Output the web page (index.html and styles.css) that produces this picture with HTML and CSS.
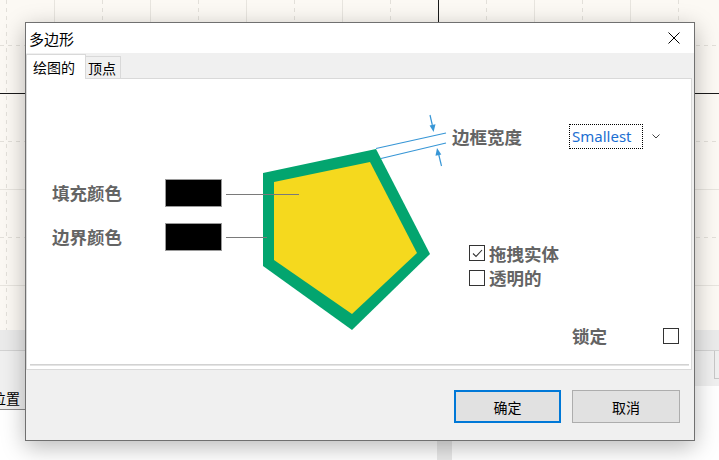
FILE: index.html
```html
<!DOCTYPE html>
<html lang="zh-CN">
<head>
<meta charset="utf-8">
<title>多边形</title>
<link rel="stylesheet" href="styles.css">
</head>
<body>
<div class="desktop">
  <svg class="canvas" width="719" height="330" viewBox="0 0 719 330">
    <g class="grid-solid">
      <line x1="54.5" y1="0" x2="54.5" y2="330"/>
      <line x1="150.5" y1="0" x2="150.5" y2="330"/>
      <line x1="246.5" y1="0" x2="246.5" y2="330"/>
      <line x1="342.5" y1="0" x2="342.5" y2="330"/>
      <line x1="534.5" y1="0" x2="534.5" y2="330"/>
      <line x1="630.5" y1="0" x2="630.5" y2="330"/>
      <line x1="0" y1="189.5" x2="719" y2="189.5"/>
      <line x1="0" y1="285.5" x2="719" y2="285.5"/>
    </g>
    <g class="grid-dash">
      <line x1="6.5" y1="0" x2="6.5" y2="330"/>
      <line x1="102.5" y1="0" x2="102.5" y2="330"/>
      <line x1="198.5" y1="0" x2="198.5" y2="330"/>
      <line x1="294.5" y1="0" x2="294.5" y2="330"/>
      <line x1="390.5" y1="0" x2="390.5" y2="330"/>
      <line x1="486.5" y1="0" x2="486.5" y2="330"/>
      <line x1="582.5" y1="0" x2="582.5" y2="330"/>
      <line x1="678.5" y1="0" x2="678.5" y2="330"/>
      <line x1="0" y1="45.5" x2="719" y2="45.5"/>
      <line x1="0" y1="141.5" x2="719" y2="141.5"/>
      <line x1="0" y1="237.5" x2="719" y2="237.5"/>
    </g>
    <g class="grid-axis">
      <line x1="438.5" y1="0" x2="438.5" y2="330"/>
      <line x1="0" y1="93.5" x2="719" y2="93.5"/>
    </g>
  </svg>
  <div class="toolbar"></div>
  <div class="strip">
    <div class="strip-box"></div>
  </div>
  <div class="lower">
    <div class="pos-tab"><span>位置</span></div>
    <div class="splitter"></div>
  </div>
</div>

<div class="dialog">
  <div class="titlebar">
    <span class="title">多边形</span>
    <svg class="close" width="12" height="12" viewBox="0 0 12 12">
      <path d="M0.5 0.5L11.5 11.5M11.5 0.5L0.5 11.5" stroke="#000" stroke-width="1" fill="none"/>
    </svg>
  </div>
  <div class="tabs">
    <div class="tab active">绘图的</div>
    <div class="tab">顶点</div>
  </div>
  <div class="panel">
    <div class="diagram">
      <svg class="shapes" width="664" height="285" viewBox="27 79 664 285">
        <polygon points="263,173 376,149 430,254 352,330 263,266" fill="#03a56f"/>
        <polygon points="274,182 370,162 417,253 352,314 274,260" fill="#f5d91e"/>
        <line x1="226" y1="194.5" x2="299" y2="194.5" stroke="#7a7a7a" stroke-width="1"/>
        <line x1="226" y1="237.5" x2="267" y2="237.5" stroke="#7a7a7a" stroke-width="1"/>
        <g stroke="#3796d6" stroke-width="1.2" fill="none">
          <line x1="376" y1="148.5" x2="446" y2="133"/>
          <line x1="381" y1="158.5" x2="446" y2="143"/>
          <line x1="430" y1="115" x2="432.3" y2="125"/>
          <line x1="441.5" y1="166" x2="438.6" y2="154"/>
        </g>
        <g fill="#3796d6">
          <polygon points="433.6,132 435.5,124.2 429.6,125.6"/>
          <polygon points="437,148 441.3,154.6 435.5,155.8"/>
        </g>
      </svg>

      <div class="legend">
        <div class="legend-row">
          <span class="lbl legend-lbl">填充颜色</span>
          <span class="swatch"></span>
        </div>
        <div class="legend-row">
          <span class="lbl legend-lbl">边界颜色</span>
          <span class="swatch"></span>
        </div>
      </div>

      <div class="width-ctl">
        <span class="lbl width-lbl">边框宽度</span>
        <span class="dropdown">Smallest</span>
        <svg class="chevron" width="8" height="5" viewBox="0 0 8 5">
          <path d="M0.5 0.5L4 4L7.5 0.5" stroke="#444" stroke-width="1" fill="none"/>
        </svg>
      </div>

      <div class="checks">
        <div class="check-row">
          <span class="box">
            <svg width="13" height="13" viewBox="0 0 13 13"><path d="M2 6.5L5 9.5L11 3" stroke="#333" stroke-width="1.1" fill="none"/></svg>
          </span>
          <span class="lbl">拖拽实体</span>
        </div>
        <div class="check-row">
          <span class="box"></span>
          <span class="lbl">透明的</span>
        </div>
      </div>

      <div class="lock">
        <span class="lbl lock-lbl">锁定</span>
        <span class="box"></span>
      </div>
    </div>
    <div class="separator"></div>
  </div>
  <div class="buttons">
    <button class="btn primary">确定</button>
    <button class="btn">取消</button>
  </div>
</div>
</body>
</html>
```

FILE: styles.css
```css
* {
  box-sizing: border-box;
}

html,
body {
  margin: 0;
  padding: 0;
}

body {
  width: 719px;
  height: 460px;
  overflow: hidden;
  position: relative;
  background: #ffffff;
  font-family: "Noto Sans CJK SC", "Noto Sans", sans-serif;
  color: #000;
}

/* ---------- background application ---------- */
.desktop {
  display: flex;
  flex-direction: column;
  height: 460px;
}

.canvas {
  display: block;
  flex: none;
  background: #fcf9f4;
}

.grid-solid line {
  stroke: #e8e5df;
  stroke-width: 1;
}

.grid-dash line {
  stroke: #e3e0da;
  stroke-width: 1;
  stroke-dasharray: 4 4;
}

.grid-axis line {
  stroke: #1a1a1a;
  stroke-width: 1;
}

.toolbar {
  flex: none;
  height: 21px;
  background: #ebebeb;
  border-bottom: 1px solid #d3d3d3;
}

.strip {
  flex: none;
  height: 35px;
  background: #f0f0f0;
  display: flex;
}

.strip-box {
  margin-left: auto;
  margin-right: -6px;
  width: 11px;
  height: 28px;
  border: 1px solid #c8c8c8;
  border-top: none;
}

.lower {
  flex: 1;
  display: flex;
}

.pos-tab {
  width: 25px;
  height: 24px;
  background: #f0f0f0;
  border-bottom: 1px solid #8a8a8a;
  display: flex;
  justify-content: flex-end;
  align-items: center;
  overflow: hidden;
  padding-right: 5px;
  font-size: 14px;
  white-space: nowrap;
}

.pos-tab span {
  flex: none;
}

.splitter {
  margin-left: 412px;
  width: 15px;
  background: #e9e9e9;
}

/* ---------- dialog ---------- */
.dialog {
  position: absolute;
  left: 25px;
  top: 22px;
  width: 670px;
  height: 419px;
  border: 1px solid #707070;
  background: #f0f0f0;
  display: flex;
  flex-direction: column;
  box-shadow: 0 6px 22px rgba(0, 0, 0, 0.28);
}

.titlebar {
  flex: none;
  height: 30px;
  background: #fff;
  display: flex;
  align-items: center;
  padding-left: 3px;
  padding-right: 14px;
}

.title {
  flex: 1;
  font-size: 15px;
  line-height: 1;
}

.close {
  display: block;
}

.tabs {
  flex: none;
  height: 25px;
  padding-top: 1px;
  display: flex;
  align-items: flex-end;
}

.tab {
  height: 22px;
  font-size: 14px;
  line-height: 1;
  display: flex;
  align-items: center;
  padding-left: 2px;
  padding-right: 4px;
  border: 1px solid #d9d9d9;
  border-left: none;
  border-bottom: none;
  background: #f0f0f0;
}

.tab.active {
  position: relative;
  z-index: 1;
  width: 60px;
  height: 25px;
  margin-bottom: -1px;
  padding-left: 6px;
  padding-bottom: 1px;
  background: #fff;
  border-left: 1px solid #d9d9d9;
}

.panel {
  flex: none;
  height: 292px;
  margin-right: 2px;
  background: #fff;
  border: 1px solid #d9d9d9;
  display: flex;
  flex-direction: column;
}

.diagram {
  flex: 1;
  position: relative;
}

.separator {
  flex: none;
  margin: 0 2px 3px 3px;
  border-top: 1px solid #d2d2d2;
  border-bottom: 1px solid #e4e4e4;
}

.shapes {
  position: absolute;
  left: 0;
  top: 0;
  overflow: visible;
}

.lbl {
  font-size: 17.5px;
  font-weight: 700;
  color: #646464;
  line-height: 1;
  white-space: nowrap;
}

.legend {
  position: absolute;
  left: 25px;
  top: 100px;
  display: flex;
  flex-direction: column;
  gap: 16px;
}

.legend-row {
  display: flex;
  align-items: center;
  height: 28px;
}

.legend-lbl {
  width: 113px;
}

.swatch {
  width: 57px;
  height: 28px;
  background: #000;
  border: 1px solid #9a9a9a;
}

.width-ctl {
  position: absolute;
  left: 425px;
  top: 45px;
  height: 25px;
  display: flex;
  align-items: center;
}

.width-lbl {
  width: 117px;
}

.dropdown {
  width: 74px;
  height: 25px;
  border: 1px dotted #000;
  padding-left: 2px;
  font-family: "Noto Sans", sans-serif;
  font-size: 15px;
  line-height: 22px;
  color: #1c6fd2;
}

.chevron {
  display: block;
  margin-left: 9px;
  margin-top: 0;
}

.checks {
  position: absolute;
  left: 442px;
  top: 162px;
  display: flex;
  flex-direction: column;
}

.check-row {
  height: 24.5px;
  display: flex;
  align-items: center;
  gap: 4px;
}

.box {
  width: 16px;
  height: 16px;
  border: 1px solid #333;
  background: #fff;
  display: flex;
  align-items: center;
  justify-content: center;
}

.box svg {
  display: block;
}

.lock {
  position: absolute;
  left: 545px;
  top: 245px;
  height: 24px;
  display: flex;
  align-items: center;
}

.lock-lbl {
  width: 91px;
}

.buttons {
  flex: 1;
  display: flex;
  justify-content: flex-end;
  align-items: flex-start;
  gap: 11px;
  padding-top: 20px;
  padding-right: 14px;
}

.btn {
  width: 108px;
  height: 33px;
  background: #e1e1e1;
  border: 1px solid #adadad;
  font-family: "Noto Sans CJK SC", sans-serif;
  font-size: 14px;
  color: #000;
  padding: 0;
  margin: 0;
}

.btn.primary {
  width: 107px;
  border: 2px solid #0078d7;
}
```
